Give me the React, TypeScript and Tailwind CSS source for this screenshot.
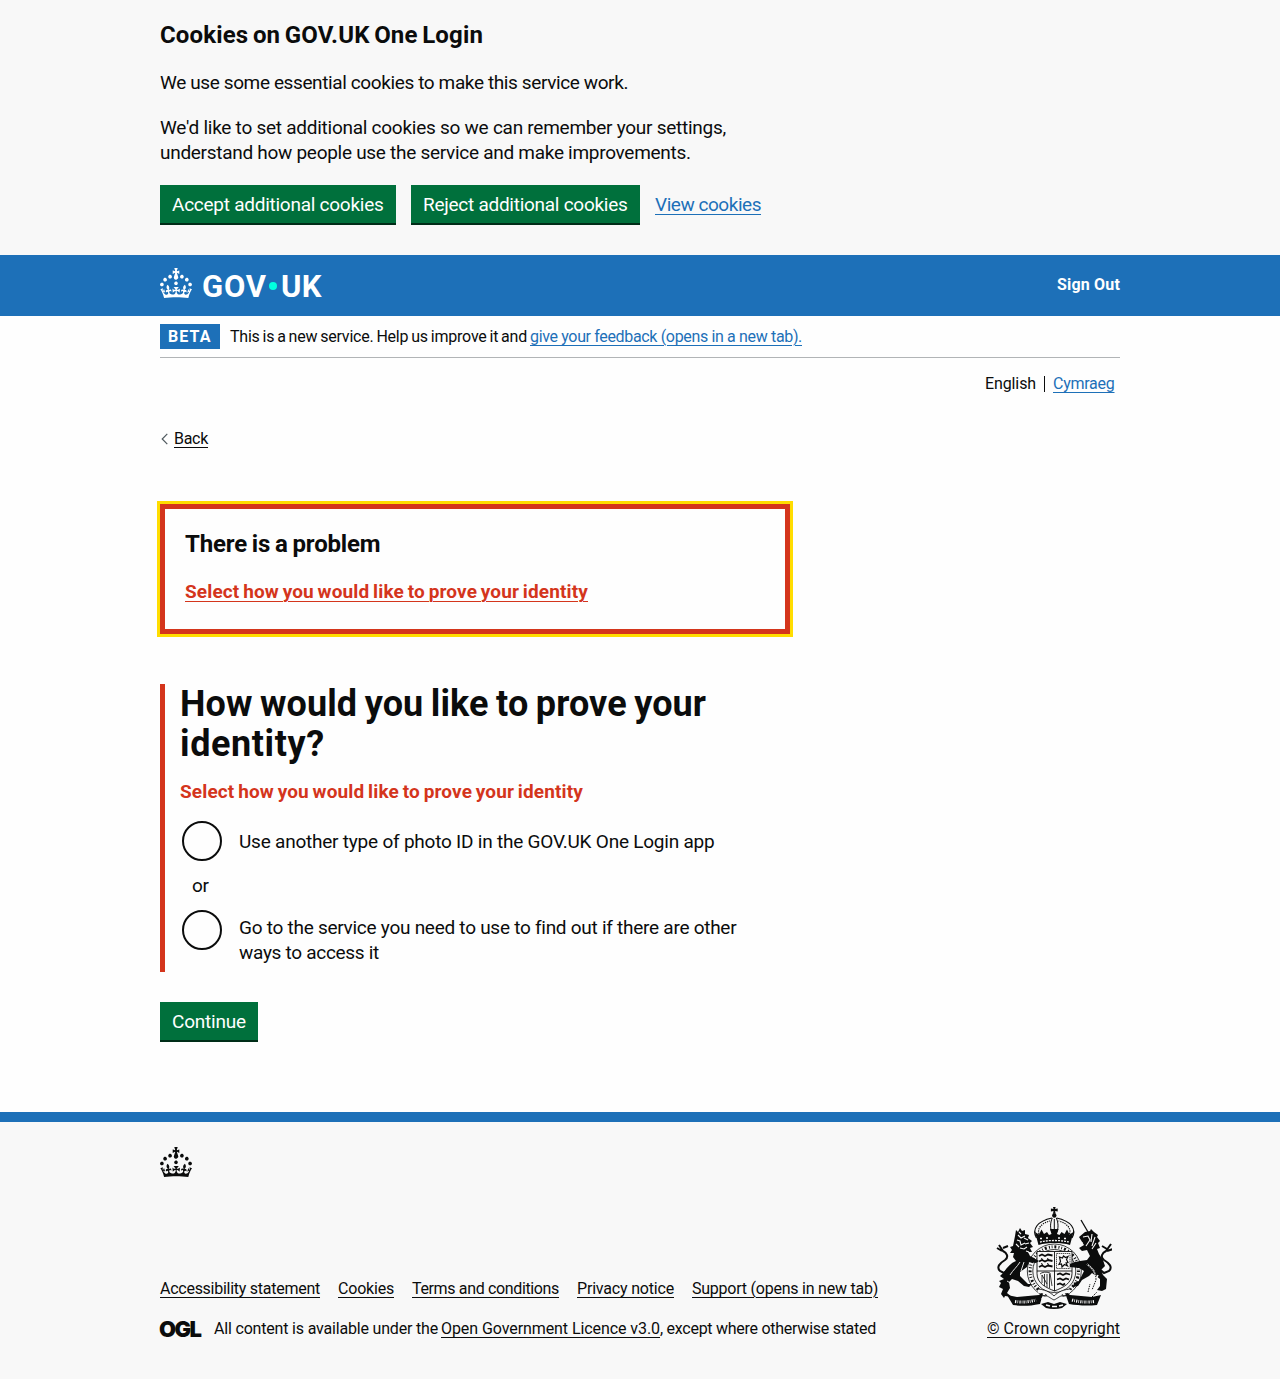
import type { ReactNode } from "react";

const CROWN_PATH =
  "M22.6 10.4c-1 .4-2-.1-2.4-1-.4-.9.1-2 1-2.4.9-.4 2 .1 2.4 1s-.1 2-1 2.4m-5.9 6.7c-.9.4-2-.1-2.4-1-.4-.9.1-2 1-2.4.9-.4 2 .1 2.4 1s-.1 2-1 2.4m10.8-3.7c-1 .4-2-.1-2.4-1-.4-.9.1-2 1-2.4.9-.4 2 .1 2.4 1s0 2-1 2.4m3.3 4.8c-1 .4-2-.1-2.4-1-.4-.9.1-2 1-2.4.9-.4 2 .1 2.4 1s-.1 2-1 2.4M17 4.7l2.3 1.2V2.5l-2.3.7-.2-.2.9-3h-3.4l.9 3-.2.2c-.1.1-2.3-.7-2.3-.7v3.4L15 4.7c.1.1.1.2.2.2l-1.3 4c-.1.2-.1.4-.1.6 0 1.1.8 2 1.9 2.2h.7c1-.2 1.9-1.1 1.9-2.1 0-.2 0-.4-.1-.6l-1.3-4c-.1-.2 0-.2.1-.3m-7.6 5.7c.9.4 2-.1 2.4-1 .4-.9-.1-2-1-2.4-.9-.4-2 .1-2.4 1s0 2 1 2.4m-5 3c.9.4 2-.1 2.4-1 .4-.9-.1-2-1-2.4-.9-.4-2 .1-2.4 1s.1 2 1 2.4m-3.2 4.8c.9.4 2-.1 2.4-1 .4-.9-.1-2-1-2.4-.9-.4-2 .1-2.4 1s0 2 1 2.4m14.8 11c4.4 0 8.6.3 12.3.8 1.1-4.5 2.4-7 3.7-8.8l-2.5-.9c.2 1.3.3 1.9 0 2.7-.4-.4-.8-1.1-1.1-2.3l-1.2 4c.7-.5 1.3-.8 2-.9-1.1 2.5-2.6 3.1-3.5 3-1.1-.2-1.7-1.2-1.5-2.1.3-1.2 1.5-1.5 2.1-.1 1.1-2.3-.8-3-2-2.3 1.9-1.9 2.1-3.5.6-5.6-2.1 1.6-2.1 3.2-1.2 5.5-1.2-1.4-3.2-.6-2.5 1.6.9-1.4 2.1-.5 1.9.8-.2 1.1-1.7 2.1-3.5 1.9-2.7-.2-2.9-2.1-2.9-3.6.7-.1 1.9.5 2.9 1.9l.4-4.3c-1.1 1.1-2.1 1.4-3.2 1.4.4-1.2 2.1-3 2.1-3h-5.4s1.7 1.9 2.1 3c-1.1 0-2.1-.2-3.2-1.4l.4 4.3c1-1.4 2.2-2 2.9-1.9-.1 1.5-.2 3.4-2.9 3.6-1.9.2-3.4-.8-3.5-1.9-.2-1.3 1-2.2 1.9-.8.7-2.3-1.2-3-2.5-1.6.9-2.2.9-3.9-1.2-5.5-1.5 2-1.3 3.7.6 5.6-1.2-.7-3.1 0-2 2.3.6-1.4 1.8-1.1 2.1.1.2.9-.3 1.9-1.5 2.1-.9.2-2.4-.5-3.5-3 .6 0 1.2.3 2 .9l-1.2-4c-.3 1.1-.7 1.9-1.1 2.3-.3-.8-.2-1.4 0-2.7l-2.5.9c1.3 1.8 2.6 4.3 3.7 8.8 3.7-.5 7.9-.8 12.3-.8";

function Crown() {
  return (
    <svg className="block h-[30px] w-8 shrink-0" viewBox="0 0 32 30" fill="currentColor" aria-hidden="true">
      <path d={CROWN_PATH} />
    </svg>
  );
}

function Crest() {
  return (
    <svg className="block h-[102px] w-[116px]" viewBox="0 0 116 102" fill="none" stroke="#0b0c0c" aria-hidden="true">
      {/* crown */}
      <path d="M57 0h2.600l-.5 2 2.600-.5v3L59.100 4l.5 2.700H57l.5-2.700-2.600.5v-3l2.600.5z" fill="#0b0c0c" stroke="none" />
      <circle cx="58.300" cy="8.500" r="2.200" fill="#0b0c0c" stroke="none" />
      <path d="M40.500 31c-5-9 1-17 15.500-20M76 31c5-9-1-17-15.500-20" strokeWidth="1.200" />
      <path d="M43 27c-2-6 3-11 11-13M73.500 27c2-6-3-11-11-13" strokeWidth="1.200" strokeDasharray="1.300 1" />
      <path d="M56.300 11c-2.300 5-2.300 11 0 15M60.300 11c2.300 5 2.300 11 0 15M58.300 12v12" strokeWidth="1" />
      <path d="m39 25 4 2.500 2.500-5 2.500 4.500 3-2 2 3 2.500-1-1.500-5h8.600L61 27l2.500 1 2-3 3 2 2.500-4.500 2.500 5 4-2.500-3.500 13c-9-2.600-22-2.600-31.500 0z" fill="#0b0c0c" stroke="none" />
      <path d="M44 31.500h3m3-.5h3m9 0h3m3 .5h3M44 35c9-2 20-2 29 0" stroke="#f8f8f8" strokeWidth="1.300" strokeDasharray="2 1" />
      {/* garter */}
      <circle cx="58.300" cy="64" r="27" strokeWidth=".8" />
      <circle cx="58.300" cy="64" r="21.500" strokeWidth=".8" />
      <circle cx="58.300" cy="64" r="24.200" strokeWidth="3" strokeDasharray="1 1.800 .8 2 2 2.200" />
      {/* shield */}
      <path d="M41 44.500h35v22c0 10-9 14-17.500 17.500C50 80.500 41 76.500 41 66.500z" fill="#f8f8f8" strokeWidth=".9" />
      <path d="M58.500 45v39M41 64h35" strokeWidth=".9" />
      <path d="M43 49l3-1.500 3 1.500 3-1.500 4.500 1M43 54.500l3-1.500 3 1.500 3-1.500 4.500 1M43 60l3-1.500 3 1.500 3-1.500 4.500 1" strokeWidth="1.800" />
      <path d="M45 51.500l2 1m4-1 2 1m-8 4 2 1m4-1 2 1" strokeWidth="1" />
      <path d="M60.500 46.500h13.500v15H60.500z" strokeWidth=".7" strokeDasharray="1.500 .6" />
      <path d="m63.500 50 3 1 1-2 2 1.500 2.500-1-1.500 3 1.500 3-2 .5 1.500 3-3-1.500-2.500 2.500-.5-3-2.500.5 1.500-3z" strokeWidth="1.200" />
      <path d="M44 67c2-2 6-2.500 10-1l2 13M46 68v8M48.500 67v12M51 67v13M53.500 67v14M46 68l5 9" strokeWidth=".8" />
      <path d="M61 67.500l3-1 3 1.500 3-1.500 4 1M61 72.500l3-1 3 1.500 3-1.500 3 1M61 77.500l3-1 3 1.500 2-1.500" strokeWidth="1.800" />
      {/* lion */}
      <path d="M19 29l1-6 2 2 2-4 2 3 3-1 0 4 4 1-1 3 4 3-2 2 3 4-3 1 2 4-4 0 2 4 9 5-3 2-7-1-2 5-7 5 0 4 8 8 4 0-3 3-5-1-6-5-6-2-3 3 1 6-3 5 5 4-7-1-1 2-3-4 2-5-4-2 2-4-2-2 5-2-4-3 4-4c3-5 7-9 12-11l-3-4 1-4-4 0 2-3-2-3 3-1z" fill="#0b0c0c" stroke="none" />
      <path d="M22 28l3 3 4-2M21 33l3 1 1 4 4-2M24 41l4 1 3-2M28 31l4 2M29 37l4-1M23 25l2 2M20 37l3 3M30 44l3 1" stroke="#f8f8f8" strokeWidth="1.100" />
      <path d="M15 60l-7 6-4-2c-4-4 0-8 5-11 4-3 2-7-2-9l-4-6m3 6-5-3m6 0 5-2" strokeWidth="2" />
      <path d="M24 55c-3 5-7 8-10 13M28 55l-3 9M11 74l5 3M17 79l-3 6" stroke="#f8f8f8" strokeWidth=".9" />
      {/* unicorn */}
      <path d="M85 13l7 12" strokeWidth="1.300" />
      <path d="M83 30l6-5 5-1 1-2 3 3 4 3-1 2 3 4-2 2 2 5-3 1 2 5 4 6 2 6-4 4 2 5 4 4-1 10-4 2-5-1 3-4 0-7-8-6-3 3-7 4-4 6-5 1 1-4 5-2 5-10-5-3-9-1 0-3 5-2 5-1 7-1 3-4-3-6-5 1-3-3 5-3z" fill="#0b0c0c" stroke="none" />
      <path d="M87 30l5-1 2 4-4 6M96 27l-1 8M99 30l-3 9M100 36l-4 6M83 36l4 0" stroke="#f8f8f8" strokeWidth="1.100" />
      <path d="M91 57c6 5 9 8 9 16l-4 10M102 68l-3 6" stroke="#f8f8f8" strokeWidth="1.500" />
      <path d="M91 57c6 5 9 8 9 16l-4 10M92 85l2-8M96 90l5-5" strokeWidth="1" strokeDasharray="1.500 1" />
      <path d="M100 59l8 7 5-2c4-4 0-8-5-11-4-3-2-7 2-9l5-7m-4 7 6-2m-6 0-5-3" strokeWidth="2" />
      {/* motto scroll */}
      <path d="M11 88l10 2 22-2 5-5-4 14c-11 2-16 2.500-27 1zM105 88l-9 2-22-2-6-5 5 14c9 1.500 18 2 28 1z" fill="#0b0c0c" stroke="none" />
      <path d="M19 94.500c8 1 14 .5 21-1.500M76 93c7 2 14 2.500 22 1.500" stroke="#f8f8f8" strokeWidth="3" strokeDasharray="1.200 1.100 .7 1.200" />
      <path d="M42 84c6 0 12 3 16 7 4-4 10-7 16-7M46 93l12-5 12 5" stroke="#f8f8f8" strokeWidth="3.600" />
      <path d="M40 82c8 0 14 3 18 7 4-4 10-7 18-7M46 89c5-2 9 3 12 4 3-1 7-6 12-4" strokeWidth=".8" />
      <path d="M45 97l7-2 6 2 6-2 7 2-5 4c-5 1.300-11 1.300-16 0z" fill="#0b0c0c" stroke="none" />
      <path d="M50 98l4 1m9 0 4-1m-11 1.500h5" stroke="#f8f8f8" strokeWidth="1.500" />
    </svg>
  );
}

function Link({ className, children }: { className: string; children: ReactNode }) {
  return (
    <a href="#" className={`underline decoration-1 underline-offset-[2.500px] ${className}`}>
      {children}
    </a>
  );
}

function Button({ className, children }: { className: string; children: ReactNode }) {
  return (
    <button
      type="button"
      className={`mb-0.5 h-[38px] shrink-0 whitespace-nowrap bg-[#00703c] pt-px text-left text-[19px] leading-[25px] text-white shadow-[0_2px_0_#002d18] ${className}`}
    >
      {children}
    </button>
  );
}

function CookieBanner() {
  return (
    <section className="h-[255px] bg-[#f8f8f8] pt-5">
      <div className="mx-auto w-[960px] text-[19px] leading-[25px]">
        <h2 className="mb-5 text-[24px] font-bold leading-[30px] tracking-[0.150px] [word-spacing:-1.500px]">Cookies on GOV.UK One Login</h2>
        <p className="mb-5 tracking-[-0.385px]">We use some essential cookies to make this service work.</p>
        <p className="mb-5 whitespace-nowrap">
          <span className="tracking-[-0.257px]">We'd like to set additional cookies so we can remember your settings,</span>
          <br />
          <span className="tracking-[-0.285px]">understand how people use the service and make improvements.</span>
        </p>
        <div className="flex gap-[15px]">
          <Button className="w-[236px] pl-3 tracking-[-0.257px]">Accept additional cookies</Button>
          <Button className="w-[229px] pl-3 tracking-[-0.270px]">Reject additional cookies</Button>
          <Link className="mt-[7px] tracking-[-0.461px] text-[#1d70b8]">View cookies</Link>
        </div>
      </div>
    </section>
  );
}

function Header() {
  return (
    <header className="h-[61px] bg-[#1d70b8] text-white">
      <div className="mx-auto flex w-[960px] items-start justify-between pt-[13px]">
        <div className="flex items-start">
          <Crown />
          <div className="ml-[10px] flex h-[30px] items-center pt-[7px] text-[31px] font-bold leading-[30px]">
            <span className="w-[67px] tracking-[0.800px]">GOV</span>
            <span className="-mt-px mr-[4px] size-2 rounded-full bg-[#00ffe0]" />
            <span className="tracking-[0.400px]">UK</span>
          </div>
        </div>
        <a href="#" className="mt-[7px] text-[16px] font-bold leading-5 tracking-[0.178px]">Sign Out</a>
      </div>
    </header>
  );
}

function PhaseBanner() {
  return (
    <div className="flex h-[42px] items-start border-b border-[#b1b4b6] pt-2 text-[16px] leading-5">
      <strong className="h-[25px] w-[60px] bg-[#1d70b8] pl-2 pt-[3px] font-bold tracking-[1.100px] text-white">BETA</strong>
      <p className="ml-[10px] mt-[3px] flex whitespace-nowrap">
        <span className="w-[300px] tracking-[-0.220px] [word-spacing:-0.820px]">This is a new service. Help us improve it and</span>
        <Link className="tracking-[-0.345px] text-[#1d70b8]">give your feedback (opens in a new tab).</Link>
      </p>
    </div>
  );
}

function LanguageSelect() {
  return (
    <nav className="mt-4 flex items-center justify-end pr-[5.500px] text-[16px] leading-5">
      <span className="w-[59px] tracking-[-0.109px]">English</span>
      <span className="mr-2 h-4 w-px bg-[#0b0c0c]" />
      <Link className="tracking-[-0.257px] text-[#1d70b8]">Cymraeg</Link>
    </nav>
  );
}

function Radio({ className, children }: { className: string; children: ReactNode }) {
  return (
    <label className="flex items-start">
      <span className="ml-[2px] mt-[2px] size-10 shrink-0 rounded-full border-2 border-[#0b0c0c]" />
      <span className={`ml-[17px] whitespace-nowrap ${className}`}>{children}</span>
    </label>
  );
}

function Footer() {
  return (
    <footer className="h-[267px] border-t-[10px] border-[#1d70b8] bg-[#f8f8f8] pt-[25px]">
      <div className="mx-auto w-[960px] text-[16px] leading-5">
        <Crown />
        <div className="mt-[30px] flex items-end justify-between">
          <div>
            <div className="mb-5 flex gap-[18px] whitespace-nowrap">
              <Link className="w-[160px] tracking-[-0.261px]">Accessibility statement</Link>
              <Link className="w-[56px] tracking-[-0.201px]">Cookies</Link>
              <Link className="w-[147px] tracking-[-0.353px]">Terms and conditions</Link>
              <Link className="w-[97px] tracking-[-0.186px]">Privacy notice</Link>
              <Link className="tracking-[-0.233px]">Support (opens in new tab)</Link>
            </div>
            <div className="flex items-center whitespace-nowrap">
              <span className="-ml-px w-[55px] font-[Inter] text-[22px] font-black leading-5 tracking-[-1.600px]">
                OGL
              </span>
              <span className="w-[227px] tracking-[-0.183px]">All content is available under the</span>
              <Link className="w-[219px] tracking-[-0.076px]">Open Government Licence v3.0</Link>
              <span className="tracking-[-0.266px]">, except where otherwise stated</span>
            </div>
          </div>
          <div className="flex w-[133px] flex-col whitespace-nowrap">
            <div className="mb-[10px] ml-[9px]">
              <Crest />
            </div>
            <Link className="tracking-[0.030px]">© Crown copyright</Link>
          </div>
        </div>
      </div>
    </footer>
  );
}

export default function App() {
  return (
    <div className="min-h-[1379px] bg-[#fefefe] font-[Roboto,sans-serif] text-[#0b0c0c]">
      <CookieBanner />
      <Header />
      <div className="mx-auto h-[796px] w-[960px]">
        <PhaseBanner />
        <LanguageSelect />
        <div className="mt-[35px] flex items-center text-[16px] leading-5">
          <svg className="ml-px mr-[6px] block h-3 w-[7px]" viewBox="0 0 7 12" fill="none" stroke="#505a5f" strokeWidth="1.200" aria-hidden="true">
            <path d="M6.300.8 1.200 6l5.100 5.200" />
          </svg>
          <Link className="tracking-[-0.289px]">Back</Link>
        </div>
        <main className="w-[630px]">
          <section className="mt-[55px] h-[130px] border-[5px] border-[#d4351c] p-5 outline-[3px] outline-[#ffdd00]">
            <h2 className="mb-5 text-[24px] font-bold leading-[30px] tracking-[-0.155px] [word-spacing:-1px]">There is a problem</h2>
            <Link className="block w-fit whitespace-nowrap text-[19px] font-bold leading-[25px] tracking-[0.130px] [word-spacing:-1.060px] text-[#d4351c]">
              Select how you would like to prove your identity
            </Link>
          </section>
          <fieldset className="mt-[50px] h-[288px] border-l-[5px] border-[#d4351c] pl-[15px] text-[19px] leading-[25px]">
            <h1 className="mb-[15px] whitespace-nowrap text-[36px] font-bold leading-10">
              <span className="tracking-[0.090px] [word-spacing:-1.500px]">How would you like to prove your</span>
              <br />
              <span className="tracking-[0.600px]">identity?</span>
            </h1>
            <p className="mb-[15px] font-bold tracking-[0.130px] [word-spacing:-1.060px] text-[#d4351c]">Select how you would like to prove your identity</p>
            <Radio className="pt-[10px] tracking-[-0.221px]">Use another type of photo ID in the GOV.UK One Login app</Radio>
            <p className="mb-[10px] ml-3 mt-3 tracking-[-0.250px]">or</p>
            <Radio className="pt-[7px]">
              <span className="tracking-[-0.265px]">Go to the service you need to use to find out if there are other</span>
              <br />
              <span className="tracking-[-0.295px]">ways to access it</span>
            </Radio>
          </fieldset>
          <Button className="mt-[30px] w-[98px] pl-3 tracking-[-0.197px]">Continue</Button>
        </main>
      </div>
      <Footer />
    </div>
  );
}
